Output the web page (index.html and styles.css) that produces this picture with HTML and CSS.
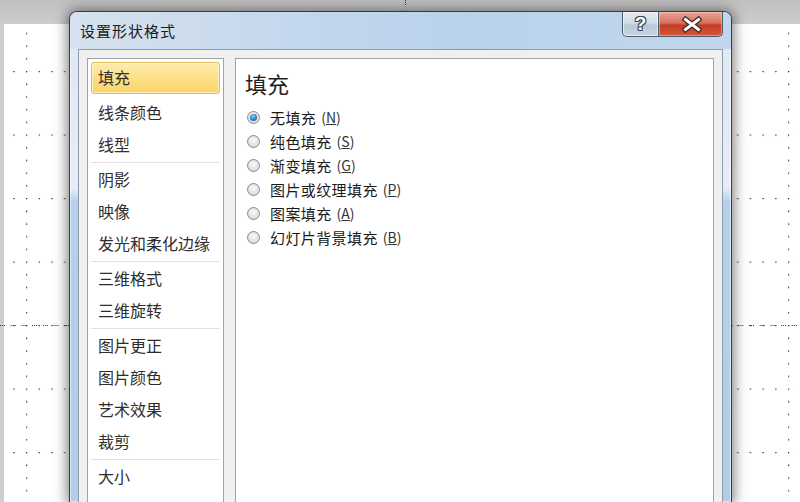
FILE: index.html
```html
<!DOCTYPE html>
<html lang="zh-CN">
<head>
  <meta charset="UTF-8">
  <title>设置形状格式</title>
  <link rel="stylesheet" href="styles.css">
</head>
<body>
  <div class="workspace">
    <div class="slide"></div>

    <svg class="guides" width="800" height="502" viewBox="0 0 800 502">
      <defs>
        <pattern id="grid" x="26" y="71" width="63.5" height="63.5" patternUnits="userSpaceOnUse">
          <circle cx="0.6" cy="0.6" r="0.8"/>
          <circle cx="13.3" cy="0.6" r="0.8"/>
          <circle cx="26" cy="0.6" r="0.8"/>
          <circle cx="38.7" cy="0.6" r="0.8"/>
          <circle cx="51.4" cy="0.6" r="0.8"/>
          <circle cx="0.6" cy="13.3" r="0.8"/>
          <circle cx="0.6" cy="26" r="0.8"/>
          <circle cx="0.6" cy="38.7" r="0.8"/>
          <circle cx="0.6" cy="51.4" r="0.8"/>
        </pattern>
      </defs>
      <rect x="4" y="24" width="796" height="478" fill="url(#grid)"/>
      <line class="center-guide" x1="0" y1="325.5" x2="800" y2="325.5"/>
      <line class="center-guide" x1="405.5" y1="0" x2="405.5" y2="14"/>
    </svg>

    <div class="dialog">
      <div class="titlebar">
        <span class="title">设置形状格式</span>
        <div class="caption-buttons">
          <button class="btn-help"><span>?</span></button>
          <button class="btn-close">
            <svg width="64" height="25" viewBox="0 0 64 25">
              <path class="x-outline" d="M26.5 7.5 L39.5 17.5 M39.5 7.5 L26.5 17.5"/>
              <path class="x-fill" d="M26.5 7.5 L39.5 17.5 M39.5 7.5 L26.5 17.5"/>
            </svg>
          </button>
        </div>
      </div>

      <div class="client">
        <div class="nav">
          <div class="group">
            <div class="nav-item selected">填充</div>
            <div class="nav-item">线条颜色</div>
            <div class="nav-item">线型</div>
          </div>
          <div class="sep"></div>
          <div class="group">
            <div class="nav-item">阴影</div>
            <div class="nav-item">映像</div>
            <div class="nav-item">发光和柔化边缘</div>
          </div>
          <div class="sep"></div>
          <div class="group">
            <div class="nav-item">三维格式</div>
            <div class="nav-item">三维旋转</div>
          </div>
          <div class="sep"></div>
          <div class="group">
            <div class="nav-item">图片更正</div>
            <div class="nav-item">图片颜色</div>
            <div class="nav-item">艺术效果</div>
            <div class="nav-item">裁剪</div>
          </div>
          <div class="sep"></div>
          <div class="group">
            <div class="nav-item">大小</div>
          </div>
        </div>

        <div class="panel">
          <h2 class="panel-title">填充</h2>
          <div class="radio-list">
            <label class="radio-row"><span class="radio checked"></span>无填充<span class="key">(<u>N</u>)</span></label>
            <label class="radio-row"><span class="radio"></span>纯色填充<span class="key">(<u>S</u>)</span></label>
            <label class="radio-row"><span class="radio"></span>渐变填充<span class="key">(<u>G</u>)</span></label>
            <label class="radio-row"><span class="radio"></span>图片或纹理填充<span class="key">(<u>P</u>)</span></label>
            <label class="radio-row"><span class="radio"></span>图案填充<span class="key">(<u>A</u>)</span></label>
            <label class="radio-row"><span class="radio"></span>幻灯片背景填充<span class="key">(<u>B</u>)</span></label>
          </div>
        </div>
      </div>
    </div>
  </div>
</body>
</html>
```

FILE: styles.css
```css
body {
  margin: 0;
  width: 800px;
  height: 502px;
  overflow: hidden;
  background: linear-gradient(#bfbfbf, #cdcdcd 24px, #cfcfcf);
  font-family: "Noto Sans CJK SC", "Liberation Sans", sans-serif;
}

.workspace {
  position: relative;
  height: 502px;
  padding: 24px 0 0 4px;
  box-sizing: border-box;
}

.slide {
  height: 100%;
  background: #fff;
}

.guides {
  position: absolute;
  top: 0;
  left: 0;
}

.guides circle {
  fill: #3c3c3c;
}

.center-guide {
  stroke: #333;
  stroke-width: 1;
  stroke-dasharray: 1 1 1 1 1 5.7;
}

/* dialog window */
.dialog {
  position: absolute;
  left: 69px;
  top: 11px;
  width: 663px;
  height: 491px;
  box-sizing: border-box;
  display: flex;
  flex-direction: column;
  padding: 0 8px;
  border: 1px solid rgba(25, 35, 45, 0.85);
  border-bottom: none;
  border-radius: 8px 8px 0 0;
  background: linear-gradient(to bottom, #c9dbee 0, #dfe8f3 40px, #e6edf6 176px, #b6d0eb 190px, #b3cde9 100%);
  box-shadow: 0 1px 13px 2px rgba(0, 0, 0, 0.5), inset 0 0 0 1px rgba(255, 255, 255, 0.55);
}

.titlebar {
  display: flex;
  justify-content: space-between;
  align-items: flex-start;
  height: 37px;
  flex-shrink: 0;
  margin: 0 -8px;
  padding: 0 8px;
  border-radius: 7px 7px 0 0;
  background: linear-gradient(to right, #d6e2ee 0, #c3d7ed 35%, #b9d2ec 60%, #c2d7ee 100%);
}

.title {
  margin: 10px 0 0 2px;
  font-size: 15px;
  line-height: 18px;
  letter-spacing: 1px;
  color: #1a1a1a;
}

.caption-buttons {
  display: flex;
}

.caption-buttons button {
  height: 25px;
  margin: 0;
  padding: 0;
  border: 1px solid #4e5b6b;
  border-top: none;
  box-sizing: border-box;
  cursor: pointer;
}

.btn-help {
  width: 37px;
  border-radius: 0 0 0 5px;
  background: linear-gradient(#e4eaf1, #d3dde8 45%, #b9c7d6 55%, #c8d4e1);
  box-shadow: inset 0 0 0 1px rgba(255, 255, 255, 0.6);
}

.btn-help span {
  font-family: "Liberation Sans", sans-serif;
  font-weight: bold;
  font-size: 19px;
  line-height: 22px;
  color: #fff;
  text-shadow: 1px 0 0 #3e4956, -1px 0 0 #3e4956, 0 1px 0 #3e4956, 0 -1px 0 #3e4956,
    1px 1px 0 #3e4956, -1px -1px 0 #3e4956, 1px -1px 0 #3e4956, -1px 1px 0 #3e4956;
}

.btn-close {
  width: 64px;
  border-left: none !important;
  border-radius: 0 0 5px 0;
  background: linear-gradient(#e8a797, #d9725f 45%, #c53c24 55%, #d4573c);
  box-shadow: inset 0 0 0 1px rgba(255, 220, 210, 0.45);
}

.btn-close svg {
  display: block;
}

.x-outline {
  stroke: #3d2a26;
  stroke-width: 5.5;
  stroke-linecap: square;
  fill: none;
}

.x-fill {
  stroke: #fff;
  stroke-width: 3;
  stroke-linecap: square;
  fill: none;
}

/* client area */
.client {
  flex: 1;
  display: flex;
  gap: 11px;
  padding: 8px 8px 0;
  border: 1px solid #8e9bab;
  border-bottom: none;
  background: #f0f0f0;
}

.nav {
  width: 137px;
  flex-shrink: 0;
  box-sizing: border-box;
  padding-top: 3px;
  border: 1px solid #a2a2a2;
  border-bottom: none;
  background: #fff;
}

.nav-item {
  height: 32px;
  margin: 0 3px;
  padding: 0 6px;
  box-sizing: border-box;
  border: 1px solid transparent;
  border-radius: 3px;
  font-size: 16px;
  line-height: 29px;
  color: #2e2e2e;
  white-space: nowrap;
}

.nav-item.selected {
  margin-bottom: 3px;
  border-color: #e2bc5a;
  background: linear-gradient(#fdecaf, #fcdf86 50%, #fbd46a);
  box-shadow: inset 0 0 0 1px rgba(255, 250, 230, 0.6);
}

.sep {
  height: 1px;
  margin: 1px 3px;
  background: #e1e1e1;
}

.panel {
  flex: 1;
  padding: 10px 9px;
  border: 1px solid #a2a2a2;
  border-bottom: none;
  background: #fff;
}

.panel-title {
  margin: 0;
  font-size: 22px;
  font-weight: normal;
  line-height: 28px;
  color: #1e1e1e;
}

.radio-list {
  margin-top: 8px;
}

.radio-row {
  display: flex;
  align-items: center;
  height: 24px;
  padding-left: 2px;
  font-size: 15px;
  letter-spacing: 0.4px;
  color: #1a1a1a;
}

.radio {
  width: 13px;
  height: 13px;
  margin-right: 10px;
  box-sizing: border-box;
  border: 1px solid #8d8d8d;
  border-radius: 50%;
  background: radial-gradient(circle at 50% 40%, #fafafa 0, #e6e6e6 45%, #cfcfcf 100%);
  display: flex;
  align-items: center;
  justify-content: center;
}

.radio.checked::after {
  content: "";
  width: 7px;
  height: 7px;
  border-radius: 50%;
  background: radial-gradient(circle at 45% 35%, #8fd0f5 0, #2c86cc 50%, #1a4f86 100%);
}

.key {
  margin-left: 5px;
  font-size: 14px;
  letter-spacing: 0;
  color: #333;
}
```
